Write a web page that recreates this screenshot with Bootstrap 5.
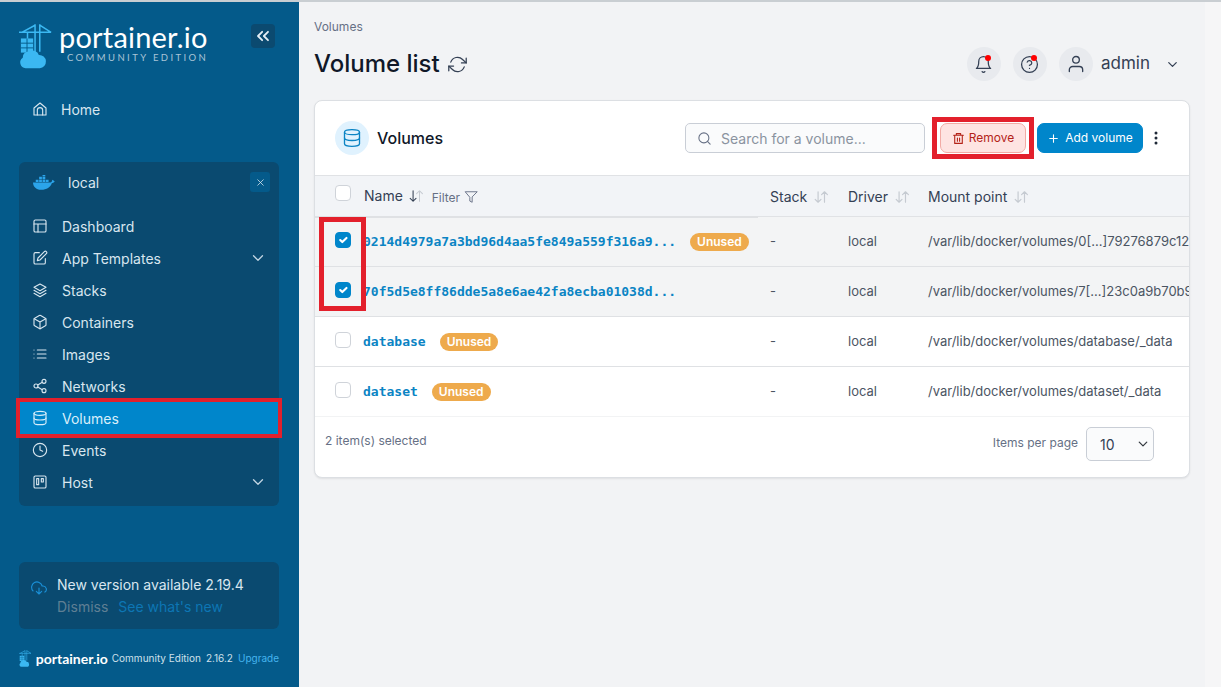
<!DOCTYPE html>
<html lang="en">
<head>
<meta charset="UTF-8">
<meta name="viewport" content="width=device-width, initial-scale=1.0">
<title>Volume list</title>
<link href="https://cdn.jsdelivr.net/npm/bootstrap@5.3.0/dist/css/bootstrap.min.css" rel="stylesheet">
<style>
  html, body { height: 100%; overflow: hidden; }
  body { font-family: Inter, "Liberation Sans", sans-serif; background: #f2f3f5; }
  .ic { fill: none; stroke: currentColor; stroke-width: 2; stroke-linecap: round; stroke-linejoin: round; flex: none; }
  .top-line { height: 2px; background: #c9ced2; }
  .app-shell { height: 685px; }

  /* sidebar */
  .side { width: 299px; background: #045a8a; color: #d8e6ef; padding: 0 20px 0 19px; }
  .side .ic { stroke-width: 1.700; }
  .brand { height: 60px; margin-top: 20px; }
  .brand-logo { margin: 1px 6px 0 0; }
  .brand-name { font-family: Lato, sans-serif; font-size: 29px; font-weight: 400; line-height: 30px; color: #fff; letter-spacing: .2px; }
  .brand-sub { font-family: Lato, sans-serif; font-size: 9.5px; letter-spacing: 2.4px; line-height: 10px; color: #a9c4d6; padding-left: 8px; margin-top: 1px; }
  .collapse-btn { width: 24px; height: 24px; background: #0b4a70; border-radius: 4px; color: #e4eef5; margin: 2px 4px 0 auto; }
  .side .collapse-btn .ic { stroke-width: 2.200; }
  .home-item { height: 32px; margin-top: 11px; padding-left: 13px; gap: 13px; font-size: 14px; }
  .env-panel { background: #0a4a70; border-radius: 6px; margin-top: 37px; padding-bottom: 8px; }
  .env-head { height: 48px; padding: 0 9px 8px 14px; font-size: 14px; gap: 13px; }
  .env-close { width: 20px; height: 20px; background: #045a8a; border-radius: 3px; color: #d8e6ef; margin-left: auto; }
  .env-item { height: 32px; padding: 0 12px 0 13px; gap: 14px; font-size: 14px; color: #d8e6ef; text-decoration: none; }
  .env-item.is-active { background: #0086cb; margin: 0 1px; padding-left: 12px; outline: 4px solid #e3202c; color: #d8eefa; position: relative; }
  .env-item .chev { margin-left: auto; color: #c2d5e2; }
  .update-box { background: #0a4a70; border-radius: 6px; height: 67px; padding: 14px 12px; margin-top: auto; font-size: 14px; gap: 10px; }
  .update-links { font-size: 14px; margin-top: 4px; }
  .update-dismiss { color: #5f7f94; margin-right: 10px; }
  .update-see { color: #0d76b4; }
  .foot-row { height: 58px; font-size: 10px; color: #cfe0ea; white-space: nowrap; }
  .foot-name { font-family: Lato, sans-serif; font-weight: 700; font-size: 14px; color: #fff; margin: 0 4px 0 4px; }
  .foot-ver { margin-left: 5px; }
  .foot-up { color: #45b4ee; margin-left: 5px; }

  /* main */
  .main-col { padding: 0 16px 0 15px; min-width: 0; }
  .side-strip { width: 16px; background: #f6f6f7; flex: none; }
  .crumb { font-size: 12px; color: #667085; margin-top: 17px; line-height: 15px; }
  .page-head { height: 66px; padding-bottom: 6px; }
  .page-title { font-size: 24px; font-weight: 500; color: #101828; margin: 0; }
  .round-btn { width: 34px; height: 34px; border-radius: 50%; background: #e8eaee; color: #344054; position: relative; }
  .round-btn .dot { position: absolute; top: 8px; right: 10px; width: 6px; height: 6px; border-radius: 50%; background: #f00; }
  .admin-name { font-size: 17px; color: #344054; margin: 0 7px 0 0; }
  .admin-chev { margin-right: 9px; color: #344054; }

  .vol-card { width: 876px; border: 1px solid #dcdfe3; border-radius: 8px; background: #fff; overflow: hidden; position: relative; box-shadow: 0 1px 2px rgba(0,0,0,.08); }
  .vol-head { height: 74px; padding: 0 28px 0 20px; }
  .vol-icon { width: 34px; height: 34px; border-radius: 50%; background: #e0f2fe; color: #0b84c4; margin-right: 8px; }
  .vol-title { font-size: 16px; font-weight: 500; color: #101828; }
  .search-box { width: 240px; height: 30px; border: 1px solid #c9ced6; border-radius: 5px; background: #fafbfc; padding-left: 11px; gap: 9px; color: #667085; margin-right: 15px; }
  .search-box input { border: 0; background: transparent; padding: 0; font-size: 14px; box-shadow: none; }
  .search-box input::placeholder { color: #8a93a0; }
  .remove-btn { width: 86px; height: 30px; background: #fee4e2; border: 1px solid #f2aba5; color: #b42318; border-radius: 7px; font-size: 12px; padding: 0; gap: 4px; margin-right: 11px; }
  .add-btn { width: 106px; height: 30px; background: #0086cb; border: 1px solid #0086cb; color: #fff; border-radius: 7px; font-size: 12px; padding: 0; gap: 5px; margin-right: 8px; }
  .kebab { width: 10px; color: #1f2937; }

  .vol-table { table-layout: fixed; width: 1000px; margin: 0; color: #4b5563; }
  .vol-table th { height: 41px; background: #f2f4f7; font-size: 14px; font-weight: 400; color: #344054; padding: 0 0 0 12px; vertical-align: middle; border-top: 1px solid #e0e2e5; border-bottom: 1px solid #e0e2e5; white-space: nowrap; }
  .vol-table th.thick { border-bottom: 2px solid #dfe1e4; }
  .vol-table td { height: 50px; font-size: 13px; padding: 0 0 0 12px; vertical-align: middle; border-bottom: 1px solid #dfe1e4; white-space: nowrap; overflow: hidden; background: transparent; }
  .vol-table tr.picked td { background: #f3f4f5; }
  .vol-table tr:last-child td { border-bottom: 1px solid #f2f3f4; }
  .vol-table th:first-child, .vol-table td:first-child { padding-left: 20px; }
  .vol-table td.name-cell { padding-left: 11px; }
  .vol-check { width: 16px; height: 16px; margin: 0; border-color: #cfd3d9; border-radius: 4px !important; display: block; }
  .vol-check:checked { background-color: #0086cb; border-color: #0086cb; }
  .head-check { margin-bottom: 6px; }
  .row-check { margin-bottom: 3px; }
  .vol-link { font-family: "DejaVu Sans Mono", monospace; font-size: 13px; font-weight: 700; color: #0b84c4; text-decoration: none; }
  .unused-tag { background: #eeaa4c; color: #fff; font-size: 12px; font-weight: 600; padding: 2px 7px; border-radius: 9px; margin-left: 14px; line-height: 14px; display: inline-block; }
  .sort-ic { color: #c5cad1; margin-left: 5px; vertical-align: -2px; }
  .filter-txt { font-size: 12px; color: #667085; margin-left: 3px; vertical-align: -1px; }

  .vol-foot { height: 60px; padding: 0 35px 6px 10px; font-size: 12px; color: #667085; }
  .foot-selected { margin-bottom: 6px; }
  .foot-perpage { margin-bottom: 2px; }
  .page-select { width: 68px; height: 34px; margin-left: 8px; font-size: 14px; padding: 4px 8px 4px 13px; background-color: #fafbfc; border-color: #c9ced6; border-radius: 5px; color: #344054; background-position: right 5px center; background-size: 10px; }

  /* red annotations lying over the shot */
  .mark-checks { position: absolute; left: 4px; top: 116px; width: 47px; height: 94px; border: 5px solid #e3202c; pointer-events: none; }
  .mark-remove { position: absolute; left: 617px; top: 16px; width: 102px; height: 42px; border: 5px solid #e3202c; pointer-events: none; }
</style>
</head>
<body>
<svg width="0" height="0" class="position-absolute">
  <symbol id="i-home" viewBox="0 0 24 24"><path d="M3 10.500 12 3l9 7.500V21H3z"/><path d="M8 21v-7a4 4 0 0 1 8 0v7"/></symbol>
  <symbol id="i-layout" viewBox="0 0 24 24"><rect x="3" y="3" width="18" height="18" rx="2"/><path d="M3 9h18M9 9v12"/></symbol>
  <symbol id="i-edit" viewBox="0 0 24 24"><path d="M11 4H5a2 2 0 0 0-2 2v13a2 2 0 0 0 2 2h13a2 2 0 0 0 2-2v-6"/><path d="M18.500 2.500a2.100 2.100 0 0 1 3 3L12 15l-4 1 1-4z"/></symbol>
  <symbol id="i-layers" viewBox="0 0 24 24"><path d="M12 3 3 8l9 5 9-5z"/><path d="m3 12.500 9 5 9-5"/><path d="m3 17 9 5 9-5"/></symbol>
  <symbol id="i-box" viewBox="0 0 24 24"><path d="M21 16V8a2 2 0 0 0-1-1.700l-7-4a2 2 0 0 0-2 0l-7 4A2 2 0 0 0 3 8v8a2 2 0 0 0 1 1.700l7 4a2 2 0 0 0 2 0l7-4a2 2 0 0 0 1-1.700z"/><path d="M3.300 7 12 12l8.700-5M12 22V12"/></symbol>
  <symbol id="i-list" viewBox="0 0 24 24"><path d="M8 6h13M8 12h13M8 18h13M3 6h.01M3 12h.01M3 18h.01"/></symbol>
  <symbol id="i-share" viewBox="0 0 24 24"><circle cx="18" cy="5" r="3"/><circle cx="6" cy="12" r="3"/><circle cx="18" cy="19" r="3"/><path d="m8.600 13.500 6.800 4M15.400 6.500l-6.800 4"/></symbol>
  <symbol id="i-db" viewBox="0 0 24 24"><ellipse cx="12" cy="5" rx="9" ry="3"/><path d="M3 5v14c0 1.700 4 3 9 3s9-1.300 9-3V5"/><path d="M3 12c0 1.700 4 3 9 3s9-1.300 9-3"/></symbol>
  <symbol id="i-clock" viewBox="0 0 24 24"><circle cx="12" cy="12" r="10"/><path d="M12 6v6l4 2"/></symbol>
  <symbol id="i-board" viewBox="0 0 24 24"><rect x="3" y="3" width="18" height="18" rx="2"/><path d="M7 7h3v9H7zM14 7h3v5h-3z"/></symbol>
  <symbol id="i-chev" viewBox="0 0 24 24"><path d="m6 9 6 6 6-6"/></symbol>
  <symbol id="i-x" viewBox="0 0 24 24"><path d="M18 6 6 18M6 6l12 12"/></symbol>
  <symbol id="i-dbl" viewBox="0 0 24 24"><path d="m11 17-5-5 5-5M18 17l-5-5 5-5"/></symbol>
  <symbol id="i-cloud" viewBox="0 0 24 24"><path d="M8 17l4 4 4-4M12 12v9"/><path d="M20.900 18.100A5 5 0 0 0 18 9h-1.300A8 8 0 1 0 3 16.300"/></symbol>
  <symbol id="i-refresh" viewBox="0 0 24 24"><path d="M23 4v6h-6M1 20v-6h6"/><path d="M3.500 9a9 9 0 0 1 14.900-3.400L23 10M1 14l4.600 4.400A9 9 0 0 0 20.500 15"/></symbol>
  <symbol id="i-bell" viewBox="0 0 24 24"><path d="M18 8A6 6 0 0 0 6 8c0 7-3 9-3 9h18s-3-2-3-9"/><path d="M13.700 21a2 2 0 0 1-3.400 0"/></symbol>
  <symbol id="i-help" viewBox="0 0 24 24"><circle cx="12" cy="12" r="10"/><path d="M9.100 9a3 3 0 0 1 5.800 1c0 2-3 3-3 3M12 17h.01"/></symbol>
  <symbol id="i-user" viewBox="0 0 24 24"><path d="M20 21v-2a4 4 0 0 0-4-4H8a4 4 0 0 0-4 4v2"/><circle cx="12" cy="7" r="4"/></symbol>
  <symbol id="i-search" viewBox="0 0 24 24"><circle cx="11" cy="11" r="8"/><path d="m21 21-4.300-4.300"/></symbol>
  <symbol id="i-trash" viewBox="0 0 24 24"><path d="M3 6h18M8 6V3h8v3M5 6v15h14V6M10 11v6M14 11v6"/></symbol>
  <symbol id="i-plus" viewBox="0 0 24 24"><path d="M12 5v14M5 12h14"/></symbol>
  <symbol id="i-filter" viewBox="0 0 24 24"><path d="M22 3H2l8 9.500V19l4 2v-8.500z"/></symbol>
  <symbol id="i-sort" viewBox="0 0 24 24"><path d="M7 3v18M2 16l5 5 5-5"/><path d="M18 21V3M13 8l5-5 5 5"/></symbol>
  <symbol id="i-logo" viewBox="0 0 36 48">
    <path d="M0 9.500h34M17 1v31M22 1v29M17 2 3 9.500M22 2l12 7.500M9 9.500V17" fill="none" stroke="#3bb8f2" stroke-width="1.600"/>
    <path d="M2 16h13v15H2z" fill="#3bb8f2"/>
    <path d="M2 21h13M2 26h13M8.500 16v15" stroke="#045a8a" stroke-width="1"/>
    <path d="M7 47.500a6 6 0 0 1-3-11 6 6 0 0 1 7-6.500 6.500 6.500 0 0 1 10 3.500 7 7 0 0 1 1 14z" fill="#3bb8f2"/>
  </symbol>
</svg>

<div class="top-line"></div>
<div class="app-shell d-flex">
  <nav class="side d-flex flex-column flex-shrink-0">
    <div class="brand d-flex">
      <svg class="brand-logo" width="34" height="46"><use href="#i-logo"/></svg>
      <div>
        <div class="brand-name">portainer.io</div>
        <div class="brand-sub">COMMUNITY EDITION</div>
      </div>
      <div class="collapse-btn d-flex align-items-center justify-content-center">
        <svg class="ic" width="20" height="20"><use href="#i-dbl"/></svg>
      </div>
    </div>

    <div class="home-item d-flex align-items-center">
      <svg class="ic" width="16" height="16"><use href="#i-home"/></svg>
      <span>Home</span>
    </div>

    <div class="env-panel">
      <div class="env-head d-flex align-items-center">
        <svg width="22" height="15" viewBox="0 0 24 16">
          <path d="M0 8h19c1 0 2-1.500 2-3 1 .3 2 1 2.700 2-1 1.500-2.300 1.800-3.200 1.800C19 13 15 16 9 16 3 16 0 12 0 8z" fill="#2ba4ea"/>
          <path d="M3 5h3v2.500H3zM6.700 5h3v2.500h-3zM10.400 5h3v2.500h-3zM14 5h3v2.500h-3zM6.700 1.700h3v2.700h-3zM10.400 1.700h3v2.700h-3zM10.400 -1h3v2.200h-3z" fill="#2ba4ea"/>
        </svg>
        <span>local</span>
        <div class="env-close d-flex align-items-center justify-content-center">
          <svg class="ic" width="11" height="11"><use href="#i-x"/></svg>
        </div>
      </div>
      <a class="env-item d-flex align-items-center" href="#"><svg class="ic" width="16" height="16"><use href="#i-layout"/></svg>Dashboard</a>
      <a class="env-item d-flex align-items-center" href="#"><svg class="ic" width="16" height="16"><use href="#i-edit"/></svg>App Templates<svg class="ic chev" width="18" height="18"><use href="#i-chev"/></svg></a>
      <a class="env-item d-flex align-items-center" href="#"><svg class="ic" width="16" height="16"><use href="#i-layers"/></svg>Stacks</a>
      <a class="env-item d-flex align-items-center" href="#"><svg class="ic" width="16" height="16"><use href="#i-box"/></svg>Containers</a>
      <a class="env-item d-flex align-items-center" href="#"><svg class="ic" width="16" height="16"><use href="#i-list"/></svg>Images</a>
      <a class="env-item d-flex align-items-center" href="#"><svg class="ic" width="16" height="16"><use href="#i-share"/></svg>Networks</a>
      <a class="env-item is-active d-flex align-items-center" href="#"><svg class="ic" width="16" height="16"><use href="#i-db"/></svg>Volumes</a>
      <a class="env-item d-flex align-items-center" href="#"><svg class="ic" width="16" height="16"><use href="#i-clock"/></svg>Events</a>
      <a class="env-item d-flex align-items-center" href="#"><svg class="ic" width="16" height="16"><use href="#i-board"/></svg>Host<svg class="ic chev" width="18" height="18"><use href="#i-chev"/></svg></a>
    </div>

    <div class="update-box d-flex">
      <svg class="ic mt-1" width="16" height="16" style="color:#1a8fd6"><use href="#i-cloud"/></svg>
      <div class="lh-sm">
        <div>New version available 2.19.4</div>
        <div class="update-links"><span class="update-dismiss">Dismiss</span><span class="update-see">See what's new</span></div>
      </div>
    </div>
    <div class="foot-row d-flex align-items-center flex-shrink-0">
      <svg width="15" height="21"><use href="#i-logo"/></svg>
      <span class="foot-name">portainer.io</span>
      <span>Community Edition</span>
      <span class="foot-ver">2.16.2</span>
      <span class="foot-up">Upgrade</span>
    </div>
  </nav>

  <main class="main-col flex-grow-1">
    <div class="crumb">Volumes</div>
    <div class="page-head d-flex align-items-center">
      <h1 class="page-title">Volume list</h1>
      <svg class="ic ms-2" width="19" height="19" style="color:#344054;stroke-width:1.600"><use href="#i-refresh"/></svg>
      <div class="ms-auto d-flex align-items-center gap-2">
        <div class="round-btn d-flex align-items-center justify-content-center me-1"><svg class="ic" width="19" height="19" style="stroke-width:1.600"><use href="#i-bell"/></svg><span class="dot"></span></div>
        <div class="round-btn d-flex align-items-center justify-content-center me-1"><svg class="ic" width="19" height="19" style="stroke-width:1.600"><use href="#i-help"/></svg><span class="dot"></span></div>
        <div class="round-btn d-flex align-items-center justify-content-center"><svg class="ic" width="20" height="20" style="stroke-width:1.600"><use href="#i-user"/></svg></div>
        <span class="admin-name">admin</span>
        <svg class="ic admin-chev" width="15" height="15"><use href="#i-chev"/></svg>
      </div>
    </div>

    <div class="vol-card">
      <div class="vol-head d-flex align-items-center">
        <div class="vol-icon d-flex align-items-center justify-content-center"><svg class="ic" width="20" height="20" style="stroke-width:1.600"><use href="#i-db"/></svg></div>
        <span class="vol-title">Volumes</span>
        <div class="search-box d-flex align-items-center ms-auto">
          <svg class="ic" width="15" height="15" style="stroke-width:1.700"><use href="#i-search"/></svg>
          <input class="form-control" type="text" placeholder="Search for a volume...">
        </div>
        <button class="btn remove-btn d-flex align-items-center justify-content-center"><svg class="ic" width="13" height="13"><use href="#i-trash"/></svg>Remove</button>
        <button class="btn add-btn d-flex align-items-center justify-content-center"><svg class="ic" width="13" height="13"><use href="#i-plus"/></svg>Add volume</button>
        <svg class="kebab" width="10" height="14" viewBox="0 0 10 14" fill="currentColor"><circle cx="5" cy="2" r="1.500"/><circle cx="5" cy="7" r="1.500"/><circle cx="5" cy="12" r="1.500"/></svg>
      </div>

      <table class="table vol-table">
        <colgroup><col style="width:37px"><col style="width:406px"><col style="width:78px"><col style="width:80px"><col></colgroup>
        <thead>
          <tr>
            <th class="thick"><input class="form-check-input vol-check head-check" type="checkbox"></th>
            <th class="thick">Name <svg class="ic" width="18" height="14" viewBox="0 0 24 24" style="vertical-align:-2px;stroke-width:1.800"><path d="M7 3v18M2 16l5 5 5-5" stroke="#344054"/><path d="M18 21V3M13 8l5-5 5 5" stroke="#c5cad1"/></svg> <span class="filter-txt">Filter</span> <svg class="ic" width="14" height="14" style="color:#667085;stroke-width:1.600"><use href="#i-filter"/></svg></th>
            <th>Stack<svg class="ic sort-ic" width="18" height="14"><use href="#i-sort"/></svg></th>
            <th>Driver<svg class="ic sort-ic" width="18" height="14"><use href="#i-sort"/></svg></th>
            <th>Mount point<svg class="ic sort-ic" width="18" height="14"><use href="#i-sort"/></svg></th>
          </tr>
        </thead>
        <tbody>
          <tr class="picked">
            <td><input class="form-check-input vol-check row-check" type="checkbox" checked></td>
            <td class="name-cell"><a class="vol-link" href="#">0214d4979a7a3bd96d4aa5fe849a559f316a9...</a><span class="unused-tag">Unused</span></td>
            <td>-</td><td>local</td><td>/var/lib/docker/volumes/0[...]79276879c12</td>
          </tr>
          <tr class="picked">
            <td><input class="form-check-input vol-check row-check" type="checkbox" checked></td>
            <td class="name-cell"><a class="vol-link" href="#">70f5d5e8ff86dde5a8e6ae42fa8ecba01038d...</a></td>
            <td>-</td><td>local</td><td>/var/lib/docker/volumes/7[...]23c0a9b70b9</td>
          </tr>
          <tr>
            <td><input class="form-check-input vol-check row-check" type="checkbox"></td>
            <td class="name-cell"><a class="vol-link" href="#">database</a><span class="unused-tag">Unused</span></td>
            <td>-</td><td>local</td><td>/var/lib/docker/volumes/database/_data</td>
          </tr>
          <tr>
            <td><input class="form-check-input vol-check row-check" type="checkbox"></td>
            <td class="name-cell"><a class="vol-link" href="#">dataset</a><span class="unused-tag">Unused</span></td>
            <td>-</td><td>local</td><td>/var/lib/docker/volumes/dataset/_data</td>
          </tr>
        </tbody>
      </table>

      <div class="vol-foot d-flex align-items-center justify-content-between">
        <span class="foot-selected">2 item(s) selected</span>
        <div class="d-flex align-items-center">
          <span class="foot-perpage">Items per page</span>
          <select class="form-select page-select"><option>10</option></select>
        </div>
      </div>

      <div class="mark-checks"></div>
      <div class="mark-remove"></div>
    </div>
  </main>
  <div class="side-strip"></div>
</div>
<script src="https://cdn.jsdelivr.net/npm/bootstrap@5.3.0/dist/js/bootstrap.bundle.min.js"></script>
</body>
</html>
